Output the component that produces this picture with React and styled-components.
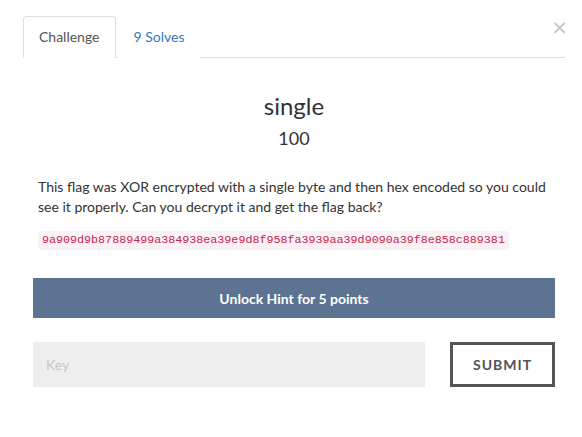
import React from "react"
import styled, { createGlobalStyle } from "styled-components"

const Global = createGlobalStyle`
  body {
    margin: 0;
    background: #fff;
    font-family: Lato, "Open Sans", sans-serif;
    color: #333;
  }
  * { box-sizing: border-box; }
`;

const Modal = styled.div`
  position: relative;
  width: 582px;
  height: 437px;
  padding: 16px 17px 0 23px;`;

const Close = styled.button`
  position: absolute;
  top: 16px;
  right: 14px;
  border: 0;
  background: none;
  padding: 0;
  font-family: "DejaVu Sans", sans-serif;
  font-size: 20px;
  line-height: 22px;
  color: #c4c4c4;
  cursor: pointer;`;

const Tabs = styled.ul`
  display: flex;
  list-style: none;
  margin: 0;
  padding: 0;
  border-bottom: 1px solid #ddd;`;

const Tab = styled.li`
  margin: 0 2px -1px 0;
  padding: 10px 15px;
  font-size: 14px;
  line-height: 20px;
  border: 1px solid ${p => (p.active ? "#ddd" : "transparent")};
  border-bottom-color: ${p => (p.active ? "#fff" : "transparent")};
  border-radius: 4px 4px 0 0;
  background: #fff;
  color: ${p => (p.active ? "#555" : "#337ab7")};
  cursor: pointer;`;

const Body = styled.div`
  padding: 35px 10px 0 10px;`;

const Title = styled.h3`
  margin: 0;
  text-align: center;
  font-size: 24px;
  font-weight: 400;
  line-height: 26px;`;

const Value = styled.h4`
  margin: 9px 0 0;
  text-align: center;
  font-size: 18px;
  font-weight: 400;
  line-height: 20px;`;

const Description = styled.div`
  margin-top: 29px;
  padding: 0 5px;
  font-size: 14px;
  line-height: 20px;
  p { margin: 0 0 14px; }`;

const Code = styled.code`
  display: block;
  width: fit-content;
  padding: 2px 4px;
  border-radius: 4px;
  background: #f9f2f4;
  color: #c7254e;
  font-family: "Liberation Mono", monospace;
  font-size: 11.7px;
  line-height: 15px;`;

const HintButton = styled.button`
  display: block;
  width: 100%;
  height: 40px;
  margin-top: 28px;
  border: 0;
  background: #5c7391;
  color: #fff;
  font-family: Lato, sans-serif;
  font-weight: 700;
  font-size: 14px;
  cursor: pointer;`;

const SubmitRow = styled.form`
  display: flex;
  justify-content: space-between;
  margin-top: 24px;`;

const KeyInput = styled.input`
  width: 392px;
  height: 45px;
  border: 0;
  padding: 0 13px;
  background: #eee;
  font-family: Lato, sans-serif;
  font-size: 14px;
  color: #333;
  &::placeholder { color: #c8c8c8; }`;

const SubmitButton = styled.button`
  width: 105px;
  height: 45px;
  border: 3px solid #555;
  background: #fff;
  color: #555;
  font-family: Lato, sans-serif;
  font-weight: 700;
  font-size: 14px;
  letter-spacing: 1px;
  cursor: pointer;`;

export default function App() {
    return (
        <>
            <Global />
            <Modal>
                <Close aria-label="Close">×</Close>
                <Tabs>
                    <Tab active>Challenge</Tab>
                    <Tab>9 Solves</Tab>
                </Tabs>
                <Body>
                    <Title>single</Title>
                    <Value>100</Value>
                    <Description>
                        <p>This flag was XOR encrypted with a single byte and then hex encoded so you could see it properly. Can you decrypt it and get the flag back?</p>
                        <Code>9a909d9b87889499a384938ea39e9d8f958fa3939aa39d9090a39f8e858c889381</Code>
                    </Description>
                    <HintButton type="button">Unlock Hint for 5 points</HintButton>
                    <SubmitRow onSubmit={e => e.preventDefault()}>
                        <KeyInput placeholder="Key" />
                        <SubmitButton type="submit">SUBMIT</SubmitButton>
                    </SubmitRow>
                </Body>
            </Modal>
        </>
    )
}
